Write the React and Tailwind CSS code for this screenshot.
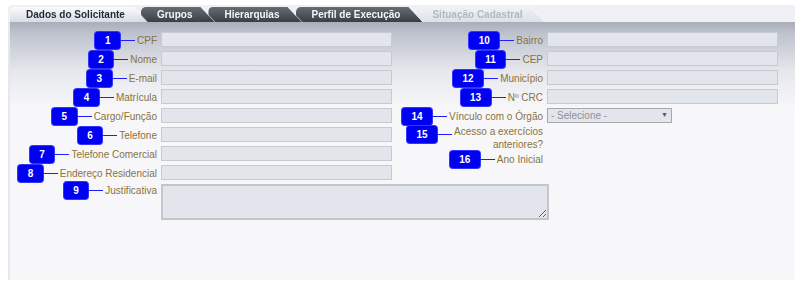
import React from "react"

const leftFields = [
  { n: 1, label: "CPF" },
  { n: 2, label: "Nome" },
  { n: 3, label: "E-mail" },
  { n: 4, label: "Matrícula" },
  { n: 5, label: "Cargo/Função" },
  { n: 6, label: "Telefone" },
  { n: 7, label: "Telefone Comercial" },
  { n: 8, label: "Endereço Residencial" },
]

const rightFields = [
  { n: 10, label: "Bairro" },
  { n: 11, label: "CEP" },
  { n: 12, label: "Município" },
  { n: 13, label: "Nº CRC" },
]

const tabs = [
  { label: "Dados do Solicitante", variant: "active", z: "z-50" },
  { label: "Grupos", variant: "dark", z: "z-40" },
  { label: "Hierarquias", variant: "dark", z: "z-30" },
  { label: "Perfil de Execução", variant: "dark", z: "z-20" },
  { label: "Situação Cadastral", variant: "disabled", z: "z-10" },
]

const tabStyles = {
  active: "bg-[linear-gradient(to_bottom,#fbfbfc,#d9dce3)] text-[#1e2a3a]",
  dark: "bg-[linear-gradient(to_bottom,#676c74,#3a3f46)] text-[#f4f5f7]",
  disabled: "bg-[linear-gradient(to_bottom,#f0f2f5,#dde0e6)] text-[#b3b8c1]",
}

function Tab({ label, variant, z, first }) {
  return (
    <div className={`relative ${z} ${first ? "" : "-ml-[6px]"} drop-shadow-[1px_0_0_rgba(255,255,255,0.6)]`}>
      <div
        className={`h-[15px] pl-[16px] pr-[22px] flex items-center rounded-tl-[5px] text-[10px] font-bold whitespace-nowrap [clip-path:polygon(0_0,calc(100%_-_14px)_0,100%_100%,0_100%)] ${tabStyles[variant]}`}
      >
        {label}
      </div>
    </div>
  )
}

function Badge({ n }) {
  return (
    <div className="flex items-center shrink-0">
      <span className="inline-flex items-center justify-center h-[17px] min-w-[24px] px-[9.5px] rounded-[3px] bg-[#0000f2] text-white text-[10px] font-bold shadow-[0_0_0_1px_#3434ff]">
        {n}
      </span>
      <span className="h-px w-[15px] bg-[#2020ff]" />
    </div>
  )
}

function Label({ n, children, top }) {
  return (
    <div className={`flex justify-end ${top ? "items-start" : "items-center"}`}>
      <Badge n={n} />
      <span className="ml-[2px] text-[10px] leading-[13px] text-[#8a7240] text-right whitespace-nowrap">{children}</span>
    </div>
  )
}

function TextInput() {
  return (
    <input
      type="text"
      className="h-[15px] w-[231px] bg-[#e2e5eb] border border-[#c7cad1] outline-none"
    />
  )
}

export default function App() {
  return (
    <div className="bg-white w-[800px] h-[287px] pt-[5px] font-['Liberation_Sans',Arial,sans-serif]">
      <div className="ml-[8px] w-[787px]">
        {/* tab strip */}
        <div className="h-[17px] flex items-end pl-[2px] bg-[#eef0f4] rounded-tl-[4px]">
          {tabs.map((t, i) => (
            <Tab key={t.label} {...t} first={i === 0} />
          ))}
        </div>

        {/* panel */}
        <div className="h-[258px] border-l-2 border-[#e6e8ef] pt-[10px] bg-[linear-gradient(to_bottom,#a8aebb_0px,#bfc3cd_12px,#e6e8ed_50px,#f7f7f9_85px)]">
          <div className="grid grid-cols-[382px_382px] gap-x-[4px] items-start">
            {/* left column */}
            <div className="flex flex-col">
              {leftFields.map((f) => (
                <div key={f.n} className="grid grid-cols-[147px_231px] gap-x-[4px] h-[15px] mb-[4px]">
                  <Label n={f.n}>{f.label}</Label>
                  <TextInput />
                </div>
              ))}
              <div className="grid grid-cols-[147px_388px] gap-x-[4px]">
                <div className="flex justify-end items-start">
                  <div className="-mt-[2px]">
                    <Badge n={9} />
                  </div>
                  <span className="ml-[2px] text-[10px] leading-[13px] text-[#8a7240]">Justificativa</span>
                </div>
                <textarea className="h-[36px] w-[388px] bg-[#e2e5eb] border-2 border-[#c4c6cc] outline-none" />
              </div>
            </div>

            {/* right column */}
            <div className="flex flex-col">
              {rightFields.map((f) => (
                <div key={f.n} className="grid grid-cols-[147px_231px] gap-x-[4px] h-[15px] mb-[4px]">
                  <Label n={f.n}>{f.label}</Label>
                  <TextInput />
                </div>
              ))}
              <div className="grid grid-cols-[147px_231px] gap-x-[4px] h-[15px] mb-[2px]">
                <Label n={14}>Vínculo com o Órgão</Label>
                <div className="h-[15px] w-[125px] bg-[#e2e5eb] border border-[#a6a9b0] flex items-center justify-between px-[3px] text-[10px] text-[#8e9096]">
                  <span>- Selecione -</span>
                  <span className="text-[7px] text-[#555a62]">▼</span>
                </div>
              </div>
              <div className="grid grid-cols-[147px_231px] gap-x-[4px]">
                <div className="flex justify-end items-start">
                  <div className="mt-[1px]">
                    <Badge n={15} />
                  </div>
                  <span className="ml-[2px] text-[10px] leading-[13px] text-[#8a7240] text-right">
                    Acesso a exercícios
                    <br />
                    anteriores?
                  </span>
                </div>
                <div />
              </div>
              <div className="grid grid-cols-[147px_231px] gap-x-[4px] h-[13px]">
                <Label n={16}>Ano Inicial</Label>
                <div />
              </div>
            </div>
          </div>
        </div>
      </div>
    </div>
  )
}
